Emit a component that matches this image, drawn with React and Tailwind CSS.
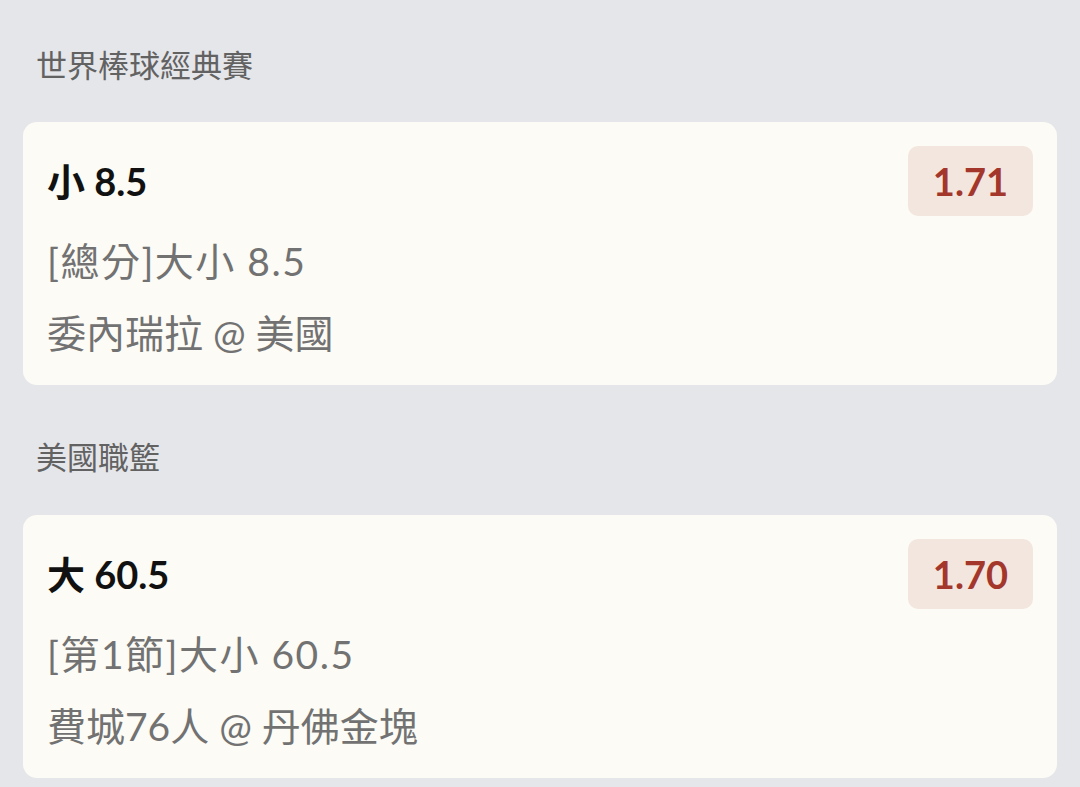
import React from "react";

const font = { fontFamily: '"Lato", "Noto Sans CJK TC", sans-serif' };

function Card({ title, odds, line1, line2 }) {
  return (
    <div className="rounded-[14px] bg-[#fcfbf5] px-[24px] pt-[24px] pb-[27px]">
      <div className="flex items-center justify-between h-[70px]">
        <div className="text-[38px] font-bold text-[#111111] leading-[50px]">{title}</div>
        <div className="h-[70px] rounded-[10px] bg-[#f3e6df] px-[25px] flex items-center text-[38px] font-bold text-[#a3372b] leading-none">
          {odds}
        </div>
      </div>
      <div className="mt-[20px] flex flex-col gap-[22px] text-[39px] leading-[50px] text-[#727272]">
        <div className="tracking-[1.5px]">{line1}</div>
        <div>{line2}</div>
      </div>
    </div>
  );
}

export default function App() {
  return (
    <div className="min-h-[787px] w-[1080px] bg-[#e5e6ea] px-[23px]" style={font}>
      <div className="pt-[40px] pb-[32px] pl-[13px] text-[31px] leading-[50px] text-[#626262]">世界棒球經典賽</div>
      <Card title="小 8.5" odds="1.71" line1="[總分]大小 8.5" line2="委內瑞拉 @ 美國" />
      <div className="pt-[47px] pb-[33px] pl-[13px] text-[31px] leading-[50px] text-[#626262]">美國職籃</div>
      <Card title="大 60.5" odds="1.70" line1="[第1節]大小 60.5" line2="費城76人 @ 丹佛金塊" />
    </div>
  );
}
